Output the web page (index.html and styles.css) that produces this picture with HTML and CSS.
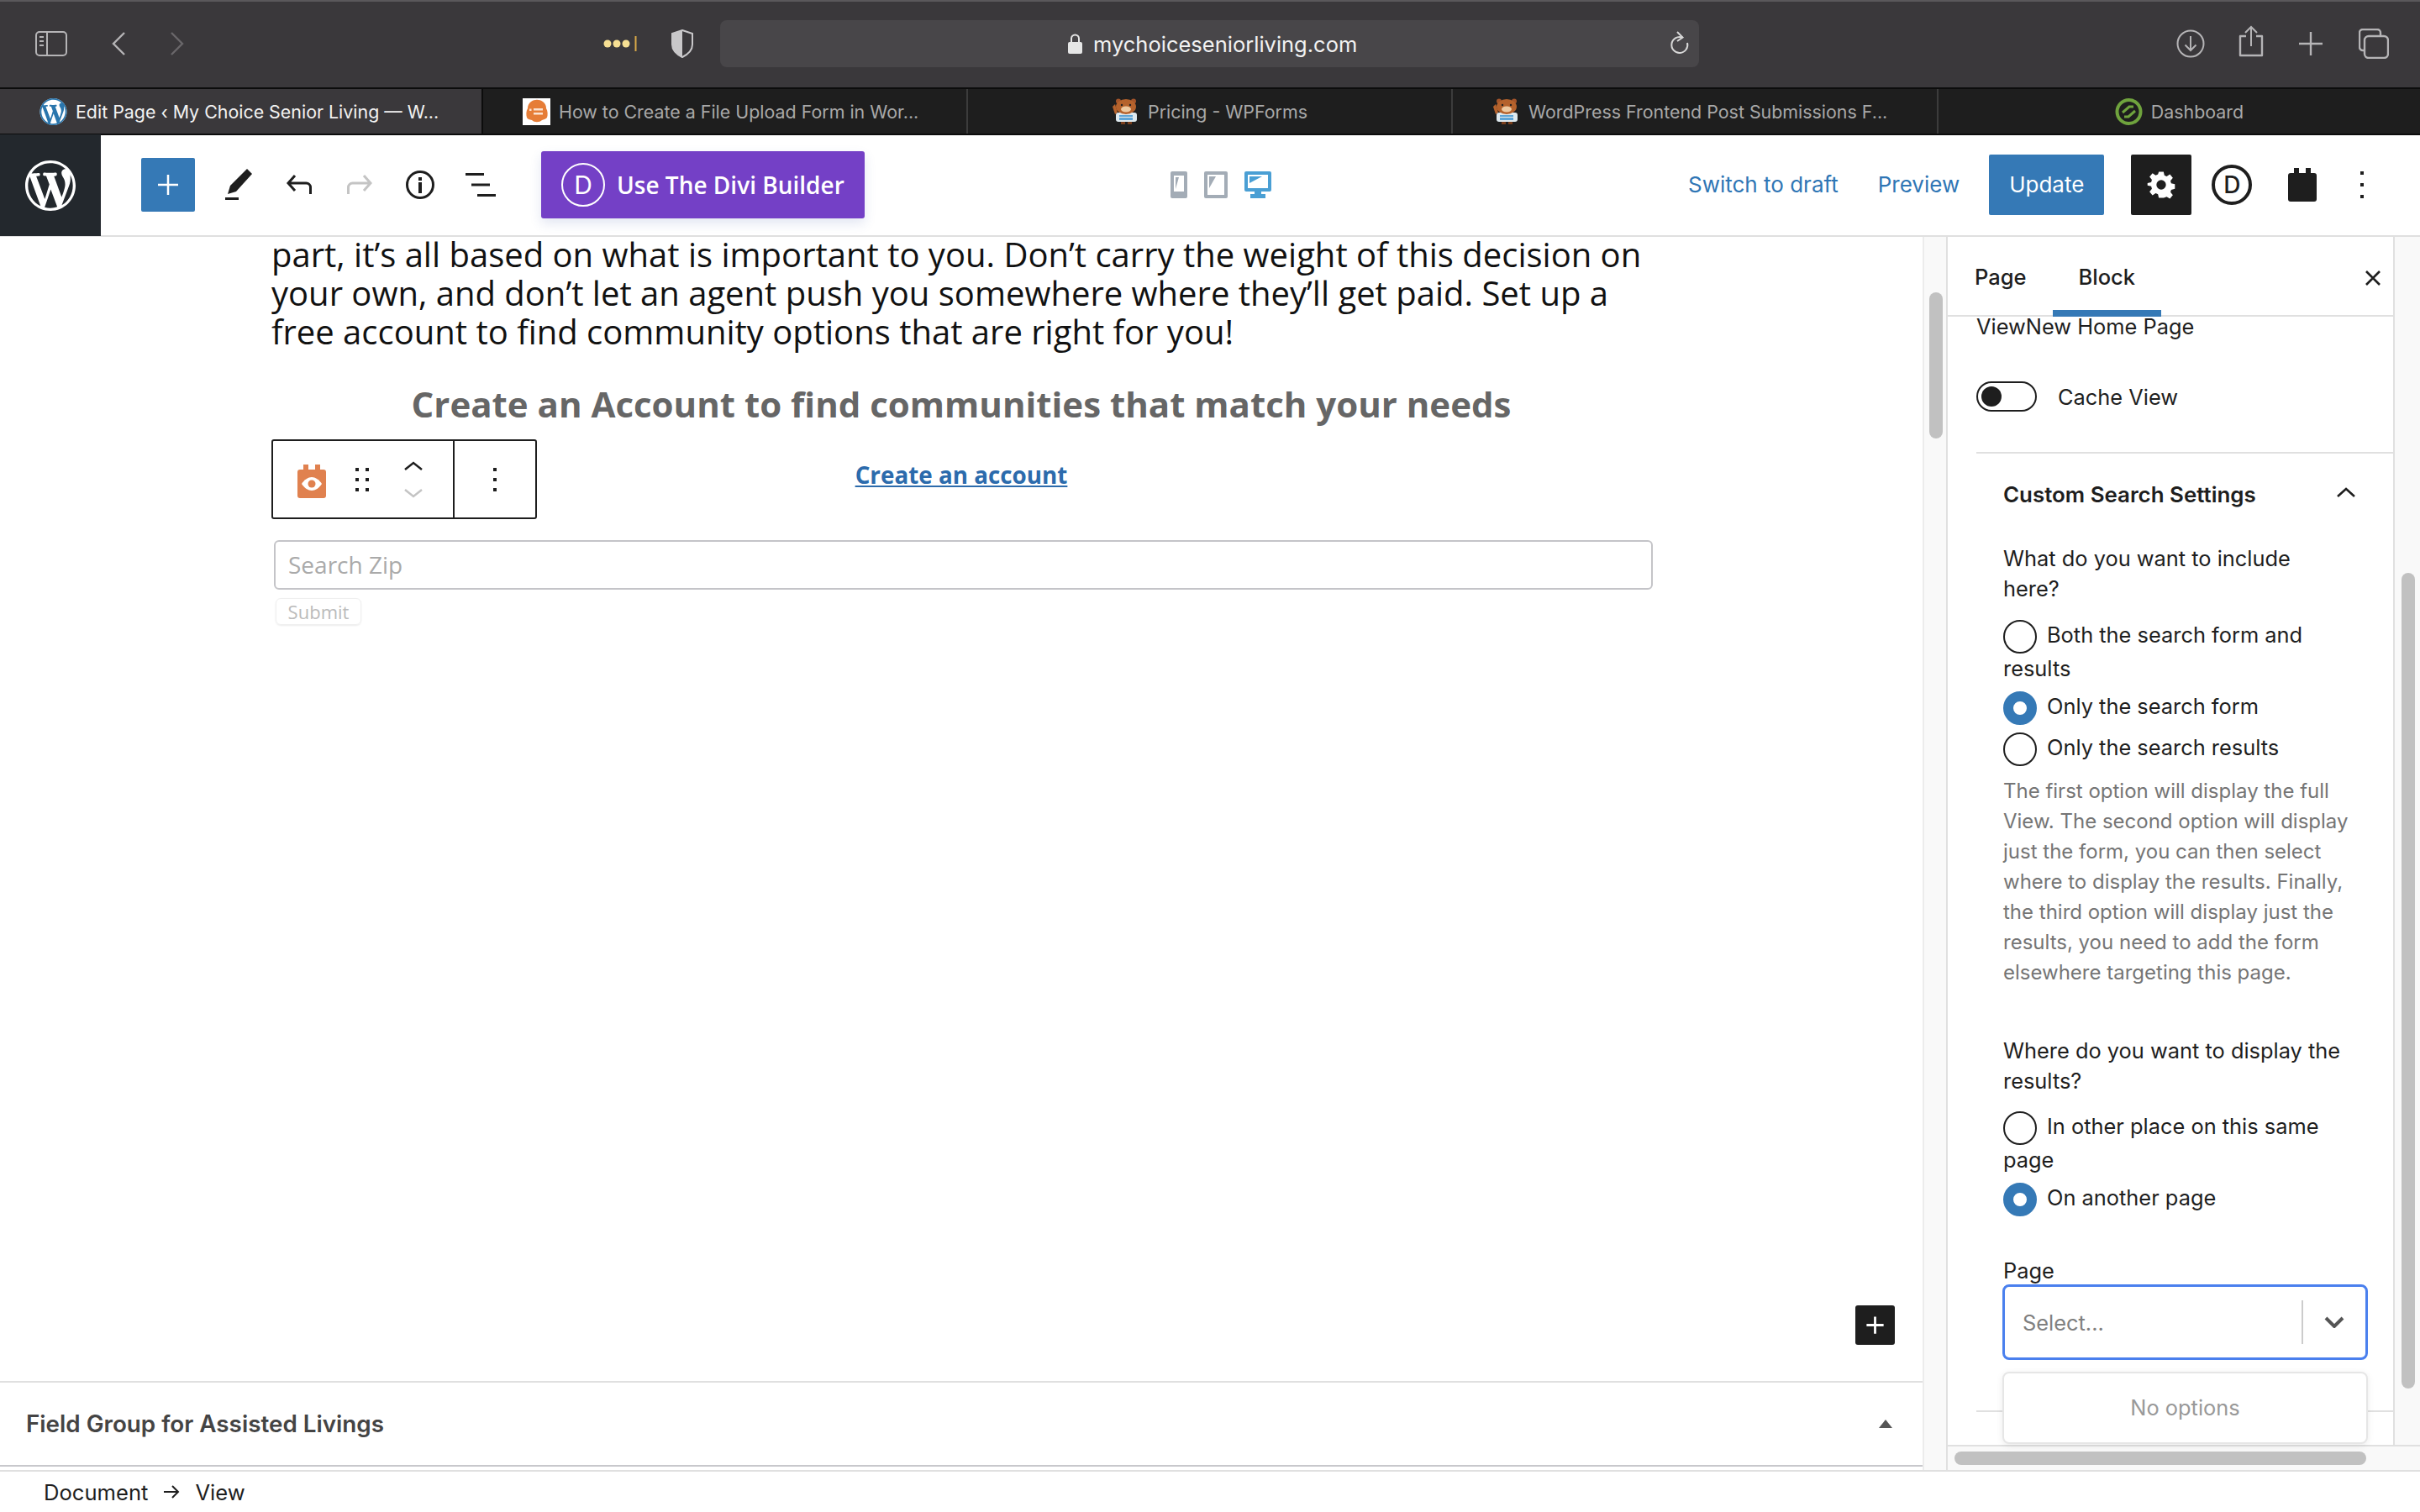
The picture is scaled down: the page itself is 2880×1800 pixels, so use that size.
FILE: index.html
```html
<!DOCTYPE html>
<html>
<head>
    <title>Edit Page ‹ My Choice Senior Living — WordPress</title>
    <link rel="stylesheet" href="styles.css">
</head>
<body>
<div class="browser">
    <div class="chrome">
        <svg class="c-side" viewBox="0 0 38 30"><rect x="1" y="1" width="36" height="28" rx="4" fill="none" stroke="#b5b4b6" stroke-width="2"/><path d="M14 1v28" stroke="#b5b4b6" stroke-width="2"/><path d="M5 7h5M5 12h5M5 17h5" stroke="#b5b4b6" stroke-width="2"/></svg>
        <svg class="c-back" viewBox="0 0 18 30"><path d="M16 2L3 15l13 13" fill="none" stroke="#b5b4b6" stroke-width="2.4"/></svg>
        <svg class="c-forward" viewBox="0 0 18 30"><path d="M2 2l13 13L2 28" fill="none" stroke="#69676a" stroke-width="2.4"/></svg>
        <svg class="c-dots" viewBox="0 0 40 18"><circle cx="5" cy="9" r="4.5" fill="#f6df93"/><circle cx="16" cy="9" r="4.5" fill="#f6df93"/><circle cx="27" cy="9" r="4.5" fill="#f6df93"/><path d="M38.500 0v18" stroke="#d8a848" stroke-width="2"/></svg>
        <svg class="c-shield" viewBox="0 0 28 34"><path d="M14 1l12 4v13c0 7-6 12-12 15C8 30 2 25 2 18V5z" fill="none" stroke="#c8c7c9" stroke-width="2"/><path d="M14 1L2 5v13c0 7 6 12 12 15z" fill="#c8c7c9"/></svg>
        <div class="urlbar">
            <div class="url-text">
                <svg class="c-lock" viewBox="0 0 17 24"><path d="M4 11V6a4.500 4.500 0 0 1 9 0v5" fill="none" stroke="#e6e6e6" stroke-width="2"/><rect y="10" width="17" height="14" rx="2" fill="#e6e6e6"/></svg>
                <span>mychoiceseniorliving.com</span>
            </div>
            <svg class="c-reload" viewBox="0 0 24 30"><path d="M15 7.500A9.500 9.500 0 1 0 21 14" fill="none" stroke="#d8d8d8" stroke-width="2"/><path d="M9 1l6.500 6.500L9 12" fill="none" stroke="#d8d8d8" stroke-width="2"/></svg>
        </div>
        <svg class="c-down" viewBox="0 0 34 34"><circle cx="17" cy="17" r="15.500" fill="none" stroke="#b5b4b6" stroke-width="2"/><path d="M17 8v17M10.500 18.500L17 25l6.500-6.500" fill="none" stroke="#b5b4b6" stroke-width="2"/></svg>
        <svg class="c-share" viewBox="0 0 30 38"><path d="M9 13H2v23h26V13h-7" fill="none" stroke="#b5b4b6" stroke-width="2.400" stroke-linejoin="round"/><path d="M15 25V2M8 9l7-7 7 7" fill="none" stroke="#b5b4b6" stroke-width="2"/></svg>
        <svg class="c-plus" viewBox="0 0 28 28"><path d="M14 0v28M0 14h28" stroke="#b5b4b6" stroke-width="2.400"/></svg>
        <svg class="c-tabs" viewBox="0 0 36 36"><rect x="7" y="9" width="28" height="26" rx="5" fill="none" stroke="#b5b4b6" stroke-width="2.400"/><path d="M6 26H5a4 4 0 0 1-4-4V5a4 4 0 0 1 4-4h17a4 4 0 0 1 4 4v3" fill="none" stroke="#b5b4b6" stroke-width="2.400"/></svg>
    </div>

    <div class="tabs">
        <div class="tab tab-active tab-left">
            <svg class="favicon" viewBox="0 0 20 20"><circle cx="10" cy="10" r="10" fill="#fff"/><path fill="#2a76ad" d="M20 10c0-5.510-4.490-10-10-10C4.480 0 0 4.490 0 10c0 5.520 4.480 10 10 10 5.510 0 10-4.480 10-10zM7.780 15.370L4.370 6.220c.55-.02 1.170-.08 1.170-.08.5-.06.44-1.130-.06-1.110 0 0-1.450.11-2.370.11-.18 0-.37 0-.58-.01C4.120 2.690 6.870 1.110 10 1.110c2.330 0 4.450.87 6.050 2.340-.68-.11-1.650.39-1.650 1.580 0 .74.45 1.360.9 2.100.35.61.55 1.360.55 2.460 0 1.490-1.400 5-1.400 5l-3.030-8.370c.54-.02.82-.17.82-.17.5-.05.44-1.250-.06-1.220 0 0-1.440.12-2.380.12-.87 0-2.330-.12-2.330-.12-.5-.03-.56 1.200-.06 1.220l.92.08 1.260 3.410zM17.410 10c.24-.64.74-1.870.43-4.250.7 1.290 1.050 2.710 1.050 4.250 0 3.290-1.730 6.240-4.400 7.780.97-2.590 1.940-5.200 2.920-7.780zM6.100 18.090C3.120 16.650 1.110 13.530 1.110 10c0-1.300.23-2.480.72-3.590C3.250 10.300 4.670 14.200 6.100 18.090zm4.030-6.630l2.580 6.980c-.86.29-1.760.45-2.710.45-.79 0-1.570-.11-2.290-.33.81-2.380 1.620-4.740 2.420-7.100z"/></svg>
            <span>Edit Page ‹ My Choice Senior Living — W...</span>
        </div>
        <div class="tab tab-left">
            <svg class="favicon" viewBox="0 0 33 32"><rect width="33" height="32" fill="#fff"/><path d="M10 4c4-3 10-3 14 0 3 2 4 5 4 8 2 3 2 8 1 11-2 2-4 2-6 3-3 3-9 3-12 0-3-1-5-1-6-3-1-3-1-8 1-11 0-3 1-6 4-8z" fill="#e67d37"/><path d="M8 12.500h2.500v2.500H8zM13 12h11v2.500H13zM13 17h11v2.500H13z" fill="#fbe3d2"/></svg>
            <span>How to Create a File Upload Form in Wor...</span>
        </div>
        <div class="tab">
            <svg class="favicon" viewBox="0 0 33 32"><path d="M1 10l3-3 3 10-3 2z" fill="#b5622c"/><rect x="5" y="17" width="25" height="11" rx="3" fill="#dfe9ee"/><rect x="9" y="20" width="16" height="6" fill="#5da5d8"/><path d="M9 22.500h16" stroke="#dfe9ee" stroke-width="1"/><circle cx="8" cy="3.500" r="3" fill="#a5552a"/><circle cx="26" cy="3.500" r="3" fill="#a5552a"/><ellipse cx="17" cy="10" rx="12" ry="9" fill="#b5622c"/><ellipse cx="17" cy="13" rx="6" ry="3.500" fill="#eec9a0"/><circle cx="12" cy="8" r="1.200" fill="#222"/><circle cx="22" cy="8" r="1.200" fill="#222"/><path d="M11 28h5v3h-5zM19 28h5v3h-5z" fill="#7a3f1c"/></svg>
            <span>Pricing - WPForms</span>
        </div>
        <div class="tab tab-left tab-wide">
            <svg class="favicon" viewBox="0 0 33 32"><path d="M1 10l3-3 3 10-3 2z" fill="#b5622c"/><rect x="5" y="17" width="25" height="11" rx="3" fill="#dfe9ee"/><rect x="9" y="20" width="16" height="6" fill="#5da5d8"/><path d="M9 22.500h16" stroke="#dfe9ee" stroke-width="1"/><circle cx="8" cy="3.500" r="3" fill="#a5552a"/><circle cx="26" cy="3.500" r="3" fill="#a5552a"/><ellipse cx="17" cy="10" rx="12" ry="9" fill="#b5622c"/><ellipse cx="17" cy="13" rx="6" ry="3.500" fill="#eec9a0"/><circle cx="12" cy="8" r="1.200" fill="#222"/><circle cx="22" cy="8" r="1.200" fill="#222"/><path d="M11 28h5v3h-5zM19 28h5v3h-5z" fill="#7a3f1c"/></svg>
            <span>WordPress Frontend Post Submissions F...</span>
        </div>
        <div class="tab tab-last">
            <svg class="favicon" viewBox="0 0 33 32"><circle cx="16.500" cy="16" r="14" fill="none" stroke="#6fa33d" stroke-width="4"/><path d="M9 17l8-7h5M11 22h5l8-7" fill="none" stroke="#6fa33d" stroke-width="3"/></svg>
            <span>Dashboard</span>
        </div>
    </div>

    <div class="edit-header">
        <div class="wp-logo">
            <svg viewBox="0 0 20 20"><path fill="#fff" d="M20 10c0-5.510-4.490-10-10-10C4.480 0 0 4.490 0 10c0 5.520 4.480 10 10 10 5.510 0 10-4.480 10-10zM7.780 15.370L4.370 6.220c.55-.02 1.170-.08 1.170-.08.5-.06.44-1.130-.06-1.110 0 0-1.450.11-2.370.11-.18 0-.37 0-.58-.01C4.120 2.690 6.870 1.110 10 1.110c2.330 0 4.450.87 6.050 2.340-.68-.11-1.650.39-1.650 1.580 0 .74.45 1.360.9 2.100.35.61.55 1.360.55 2.460 0 1.490-1.400 5-1.400 5l-3.030-8.370c.54-.02.82-.17.82-.17.5-.05.44-1.250-.06-1.220 0 0-1.440.12-2.380.12-.87 0-2.330-.12-2.330-.12-.5-.03-.56 1.200-.06 1.220l.92.08 1.260 3.410zM17.410 10c.24-.64.74-1.870.43-4.250.7 1.290 1.050 2.710 1.050 4.250 0 3.290-1.730 6.240-4.400 7.780.97-2.590 1.940-5.200 2.920-7.780zM6.100 18.090C3.120 16.650 1.110 13.530 1.110 10c0-1.300.23-2.480.72-3.590C3.250 10.300 4.670 14.200 6.100 18.090zm4.030-6.630l2.580 6.980c-.86.29-1.760.45-2.710.45-.79 0-1.570-.11-2.290-.33.81-2.380 1.620-4.740 2.420-7.100z"/></svg>
        </div>
        <div class="add-btn"><svg viewBox="0 0 24 24"><path d="M12 0v24M0 12h24" stroke="#fff" stroke-width="2.500"/></svg></div>
        <svg class="i-pen" viewBox="0 0 32 38"><path d="M26 0l6 6-19 21-10 3 3-10z" fill="#1e1e1e"/><path d="M0 34h16v3H0z" fill="#1e1e1e"/></svg>
        <svg class="i-undo" viewBox="0 0 32 26"><path d="M29.500 24V16a5 5 0 0 0-5-5H3M11 2L3 11l8 9" fill="none" stroke="#1e1e1e" stroke-width="3"/></svg>
        <svg class="i-redo" viewBox="0 0 32 26"><path d="M2.500 24V16a5 5 0 0 1 5-5H29M21 2l8 9-8 9" fill="none" stroke="#c4c4c4" stroke-width="3"/></svg>
        <svg class="i-info" viewBox="0 0 34 36"><circle cx="17" cy="18" r="15.500" fill="none" stroke="#1e1e1e" stroke-width="3"/><path d="M15 9h4v4h-4zM15 15h4v13h-4z" fill="#1e1e1e"/></svg>
        <svg class="i-list" viewBox="0 0 36 30"><path d="M0 1h22v3H0zM7 13.500h22v3H7zM14 26h22v3H14z" fill="#1e1e1e"/></svg>
        <div class="divi-btn">
            <span class="divi-d">D</span>
            <span>Use The Divi Builder</span>
        </div>
        <svg class="i-phone" viewBox="0 0 20 32"><rect width="20" height="32" rx="2" fill="#a3acb6"/><rect x="4" y="5" width="12" height="19" fill="#fff"/><path d="M6 7h4l-4 14z" fill="#a3acb6"/></svg>
        <svg class="i-tablet" viewBox="0 0 28 32"><rect width="28" height="32" rx="2" fill="#a3acb6"/><rect x="4" y="4" width="20" height="24" fill="#fff"/><path d="M6 6h8L6 20z" fill="#a3acb6"/></svg>
        <svg class="i-desktop" viewBox="0 0 32 32"><path d="M12 24h8v3h-8zM7 27h18v5H7z" fill="#4a9fd4"/><rect width="32" height="24" rx="2" fill="#4a9fd4"/><rect x="4" y="4" width="24" height="16" fill="#fff"/><path d="M6 6h15L6 14z" fill="#4a9fd4"/></svg>
        <a class="head-link link-draft">Switch to draft</a>
        <a class="head-link link-preview">Preview</a>
        <div class="update-btn">Update</div>
        <div class="gear-btn"><svg viewBox="0 0 24 24"><path fill="#fff" fill-rule="evenodd" d="M10 1h4l.7 3.100 1.900.8 2.700-1.700 2.500 3-2 2.500.6 2 3.100.8v3.900l-3.100.8-.6 2 2 2.500-2.500 3-2.700-1.700-1.900.8L14 23h-4l-.7-3.100-1.900-.8-2.700 1.700-2.500-3 2-2.500-.6-2-3.100-.8V10.600l3.100-.8.6-2-2-2.500 2.500-3 2.700 1.700 1.900-.8zM12 8a4 4 0 1 0 0 8 4 4 0 0 0 0-8z"/></svg></div>
        <span class="divi-small">D</span>
        <svg class="i-cal" viewBox="0 0 34 40"><path d="M7 0h6v6h8V0h6v6h4a3 3 0 0 1 3 3v28a3 3 0 0 1-3 3H3a3 3 0 0 1-3-3V9a3 3 0 0 1 3-3h4z" fill="#1e1e1e"/></svg>
        <svg class="i-kebab" viewBox="0 0 4 32"><path d="M0 0h4v4H0zM0 14h4v4H0zM0 28h4v4H0z" fill="#1e1e1e"/></svg>
    </div>

    <div class="edit-body">
        <div class="main">
            <div class="canvas">
                <p class="para">part, it’s all based on what is important to you. Don’t carry the weight of this decision on your own, and don’t let an agent push you somewhere where they’ll get paid. Set up a free account to find community options that are right for you!</p>
                <h2 class="cta">Create an Account to find communities that match your needs</h2>
                <a class="cta-link">Create an account</a>
                <div class="search-input">Search Zip</div>
                <div class="submit-btn">Submit</div>

                <div class="block-toolbar">
                    <div class="bt-left">
                        <svg class="bt-cal" viewBox="0 0 34 40"><path d="M7 0h6v6h8V0h6v6h4a3 3 0 0 1 3 3v28a3 3 0 0 1-3 3H3a3 3 0 0 1-3-3V9a3 3 0 0 1 3-3h4z" fill="#e0814f"/><path d="M5 23c3-5 8-8 12-8s9 3 12 8c-3 5-8 8-12 8S8 28 5 23z" fill="#fff"/><circle cx="17" cy="23" r="4.500" fill="#e0814f"/></svg>
                        <svg class="bt-drag" viewBox="0 0 16 28"><path d="M0 0h4v4H0zM12 0h4v4h-4zM0 12h4v4H0zM12 12h4v4h-4zM0 24h4v4H0zM12 24h4v4h-4z" fill="#1e1e1e"/></svg>
                        <svg class="bt-move" viewBox="0 0 22 44"><path d="M1 10L11 2l10 8" fill="none" stroke="#1e1e1e" stroke-width="2.500"/><path d="M1 34l10 8 10-8" fill="none" stroke="#c4c4c4" stroke-width="2.500"/></svg>
                    </div>
                    <div class="bt-right">
                        <svg class="bt-kebab" viewBox="0 0 4 28"><path d="M0 0h4v4H0zM0 12h4v4H0zM0 24h4v4H0z" fill="#1e1e1e"/></svg>
                    </div>
                </div>

                <div class="inserter"><svg viewBox="0 0 24 24"><path d="M12 3v18M3 12h18" stroke="#fff" stroke-width="2.500"/></svg></div>
            </div>
            <div class="metabox">
                <span>Field Group for Assisted Livings</span>
                <svg class="meta-arrow" viewBox="0 0 16 10"><path d="M8 0l8 10H0z" fill="#555"/></svg>
            </div>
        </div>

        <div class="vbar"><div class="thumb thumb-main"></div></div>

        <div class="side-wrap">
            <div class="side-row">
                <div class="sidebar">
                    <div class="side-tabs">
                        <div class="side-tab">Page</div>
                        <div class="side-tab side-tab-on">Block</div>
                        <svg class="side-close" viewBox="0 0 18 18"><path d="M1 1l16 16M17 1L1 17" stroke="#1e1e1e" stroke-width="2.600"/></svg>
                    </div>
                    <div class="side-body">
                        <div class="view-name">ViewNew Home Page</div>
                        <div class="toggle-row">
                            <span class="toggle"><span class="toggle-knob"></span></span>
                            <span>Cache View</span>
                        </div>
                        <div class="divider"></div>
                        <div class="panel">
                            <div class="panel-title">
                                <span>Custom Search Settings</span>
                                <svg class="panel-chev" viewBox="0 0 22 12"><path d="M1 11L11 2l10 9" fill="none" stroke="#1e1e1e" stroke-width="2.600"/></svg>
                            </div>
                            <div class="question">What do you want to include here?</div>
                            <div class="option"><span class="radio"></span>Both the search form and results</div>
                            <div class="option"><span class="radio radio-on"></span>Only the search form</div>
                            <div class="option"><span class="radio"></span>Only the search results</div>
                            <div class="help">The first option will display the full View. The second option will display just the form, you can then select where to display the results. Finally, the third option will display just the results, you need to add the form elsewhere targeting this page.</div>
                            <div class="question question-two">Where do you want to display the results?</div>
                            <div class="option"><span class="radio"></span>In other place on this same page</div>
                            <div class="option"><span class="radio radio-on"></span>On another page</div>
                            <div class="field-label">Page</div>
                            <div class="select">
                                <span class="select-text">Select...</span>
                                <span class="select-sep"></span>
                                <svg class="select-chev" viewBox="0 0 24 14"><path d="M2 2l10 10L22 2" fill="none" stroke="#555" stroke-width="4"/></svg>
                                <div class="select-menu">No options</div>
                            </div>
                        </div>
                        <div class="divider divider-low"></div>
                    </div>
                </div>
                <div class="vbar vbar-side"><div class="thumb thumb-side"></div></div>
            </div>
            <div class="hbar"><div class="hthumb"></div></div>
        </div>
    </div>

    <div class="crumbs">
        <span>Document</span>
        <svg class="crumb-arrow" viewBox="0 0 20 16"><path d="M1 8h17M11 1l7 7-7 7" fill="none" stroke="#1e1e1e" stroke-width="2"/></svg>
        <span>View</span>
    </div>
</div>
</body>
</html>
```

FILE: styles.css
```css
* {
    box-sizing: border-box;
}
body {
    margin: 0;
    background: #fff;
    color: #1e1e1e;
    font-family: Inter, "Liberation Sans", sans-serif;
    overflow: hidden;
}
svg {
    display: block;
    flex: none;
}
.browser {
    width: 2880px;
    height: 1800px;
    display: flex;
    flex-direction: column;
}

/* browser chrome */
.chrome {
    height: 104px;
    display: flex;
    align-items: center;
    background: #3a383b;
    border-top: 2px solid #5a585b;
    padding: 0 0 2px 42px;
}
.c-side { width: 38px; height: 30px; }
.c-back { width: 18px; height: 30px; margin-left: 52px; }
.c-forward { width: 18px; height: 30px; margin-left: 52px; }
.c-dots { width: 40px; height: 18px; margin-left: 498px; }
.c-shield { width: 28px; height: 34px; margin-left: 40px; }
.urlbar {
    width: 1165px;
    height: 56px;
    margin-left: 31px;
    background: #484649;
    border-radius: 8px;
    display: flex;
    align-items: center;
    position: relative;
    padding-left: 414px;
    color: #f2f2f2;
    font-size: 25.5px;
}
.url-text {
    display: flex;
    align-items: center;
    gap: 13px;
}
.c-lock { width: 17px; height: 24px; }
.c-reload { width: 24px; height: 30px; margin-left: auto; margin-right: 11px; }
.c-down { width: 34px; height: 34px; margin-left: 568px; }
.c-share { width: 30px; height: 38px; margin-left: 40px; margin-top: -6px; }
.c-plus { width: 28px; height: 28px; margin-left: 42px; }
.c-tabs { width: 36px; height: 36px; margin-left: 43px; }

.tabs {
    height: 57px;
    display: flex;
    background: #1e1e1e;
    border-top: 2px solid #0c0c0c;
    border-bottom: 2px solid #0c0c0c;
    color: #a8a8a8;
    font-size: 21.4px;
}
.tab {
    width: 577px;
    display: flex;
    align-items: center;
    justify-content: center;
    gap: 10px;
    border-right: 2px solid #3c3c3c;
    white-space: nowrap;
}
.tab-left {
    justify-content: flex-start;
    padding-left: 47px;
}
.tab-wide {
    width: 578px;
}
.tab-last {
    flex: 1;
    width: auto;
    border-right: 0;
}
.tab-active {
    width: 575px;
    background: #3a383b;
    color: #f2f2f2;
    border-right: 2px solid #0c0c0c;
}
.favicon {
    width: 33px;
    height: 32px;
}

/* editor header */
.edit-header {
    height: 121px;
    display: flex;
    align-items: center;
    border-bottom: 2px solid #e0e0e0;
    padding-bottom: 2px;
}
.wp-logo {
    width: 120px;
    height: 121px;
    margin-bottom: -2px;
    background: #23282d;
    display: flex;
    align-items: center;
    justify-content: center;
}
.wp-logo svg { width: 60px; height: 60px; }
.add-btn {
    width: 64px;
    height: 64px;
    margin-left: 48px;
    background: #3579b6;
    border-radius: 2px;
    display: flex;
    align-items: center;
    justify-content: center;
}
.add-btn svg { width: 24px; height: 24px; }
.i-pen { width: 32px; height: 38px; margin-left: 36px; }
.i-undo { width: 32px; height: 26px; margin-left: 40px; }
.i-redo { width: 32px; height: 26px; margin-left: 40px; }
.i-info { width: 34px; height: 36px; margin-left: 39px; }
.i-list { width: 36px; height: 30px; margin-left: 37px; }
.divi-btn {
    width: 385px;
    height: 80px;
    margin-left: 54px;
    background: #7440c6;
    border-radius: 3px;
    box-shadow: 0 6px 14px rgba(60, 90, 170, 0.15);
    display: flex;
    align-items: center;
    gap: 14px;
    padding-left: 24px;
    color: #fff;
    font-family: "Open Sans", sans-serif;
    font-size: 28px;
    font-weight: 600;
}
.divi-d {
    width: 52px;
    height: 52px;
    border: 2px solid #fff;
    border-radius: 50%;
    display: flex;
    align-items: center;
    justify-content: center;
    font-family: Inter, sans-serif;
    font-weight: 400;
    font-size: 30px;
}
.i-phone { width: 20px; height: 32px; margin-left: 364px; }
.i-tablet { width: 28px; height: 32px; margin-left: 20px; }
.i-desktop { width: 32px; height: 32px; margin-left: 20px; }
.head-link {
    color: #2f76b5;
    font-size: 26px;
    white-space: nowrap;
}
.link-draft { margin-left: 496px; }
.link-preview { margin-left: 47px; }
.update-btn {
    width: 137px;
    height: 72px;
    margin-left: 35px;
    background: #3579b6;
    border-radius: 2px;
    color: #fff;
    font-size: 26px;
    display: flex;
    align-items: center;
    justify-content: center;
}
.gear-btn {
    width: 72px;
    height: 72px;
    margin-left: 32px;
    background: #1e1e1e;
    border-radius: 2px;
    display: flex;
    align-items: center;
    justify-content: center;
}
.gear-btn svg { width: 34px; height: 34px; }
.divi-small {
    width: 48px;
    height: 48px;
    margin-left: 24px;
    border: 4px solid #1e1e1e;
    border-radius: 50%;
    display: flex;
    align-items: center;
    justify-content: center;
    font-size: 28px;
    font-weight: 500;
}
.i-cal { width: 34px; height: 40px; margin-left: 43px; }
.i-kebab { width: 4px; height: 32px; margin-left: 52px; }

/* editor body */
.edit-body {
    height: 1468px;
    display: flex;
}
.main {
    width: 2288px;
    display: flex;
    flex-direction: column;
}
.canvas {
    position: relative;
    height: 1362px;
    padding-left: 323px;
    font-family: "Open Sans", sans-serif;
}
.para {
    width: 1650px;
    margin: -2px 0 0;
    font-size: 40px;
    line-height: 46px;
    color: #111;
}
.cta {
    width: 1642px;
    margin: 33px 0 0;
    font-size: 42px;
    line-height: 60px;
    font-weight: 700;
    color: #666;
    text-align: center;
}
.cta-link {
    display: block;
    width: 1642px;
    margin-top: 32px;
    text-align: center;
    font-size: 27.8px;
    line-height: 44px;
    font-weight: 700;
    color: #2c6bac;
    text-decoration: underline;
}
.search-input {
    width: 1641px;
    height: 59px;
    margin: 56px 0 0 3px;
    border: 2px solid #c4c4c8;
    border-radius: 6px;
    padding-left: 15px;
    font-size: 28px;
    line-height: 55px;
    color: #aaa;
}
.submit-btn {
    width: 102px;
    height: 32px;
    margin: 10px 0 0 5px;
    border: 1px solid #efefef;
    border-radius: 6px;
    box-shadow: 0 1px 2px rgba(0, 0, 0, 0.08);
    font-size: 22px;
    line-height: 30px;
    text-align: center;
    color: #bbb;
}
.block-toolbar {
    position: absolute;
    left: 323px;
    top: 241px;
    width: 316px;
    height: 95px;
    display: flex;
    background: #fff;
    border: 2px solid #1e1e1e;
    border-radius: 3px;
}
.bt-left {
    width: 216px;
    border-right: 2px solid #1e1e1e;
    display: flex;
    align-items: center;
}
.bt-cal { width: 34px; height: 40px; margin-left: 29px; margin-top: 4px; }
.bt-drag { width: 16px; height: 28px; margin-left: 35px; }
.bt-move { width: 22px; height: 44px; margin-left: 42px; }
.bt-right {
    flex: 1;
    display: flex;
    align-items: center;
    justify-content: center;
}
.bt-kebab { width: 4px; height: 28px; }
.inserter {
    position: absolute;
    left: 2208px;
    top: 1272px;
    width: 47px;
    height: 47px;
    background: #1e1e1e;
    border-radius: 3px;
    padding: 10px;
}
.metabox {
    height: 102px;
    border-top: 2px solid #e0e0e0;
    border-bottom: 2px solid #c8c8cc;
    display: flex;
    align-items: center;
    justify-content: space-between;
    padding: 0 36px 0 31px;
    font-size: 27.8px;
    font-weight: 600;
    color: #444;
}
.meta-arrow { width: 16px; height: 10px; }

/* scrollbars */
.vbar {
    width: 30px;
    background: #f9f9f9;
    border-left: 2px solid #ececec;
    border-right: 2px solid #e0e0e0;
    padding-left: 6px;
}
.thumb {
    width: 16px;
    background: #c1c1c1;
    border-radius: 8px;
}
.thumb-main {
    height: 174px;
    margin-top: 66px;
}
.vbar-side {
    border-left: 0;
    border-right: 0;
    padding-left: 8px;
}
.thumb-side {
    height: 971px;
    margin-top: 400px;
}
.hbar {
    height: 30px;
    background: #f9f9f9;
    border-top: 2px solid #e0e0e0;
    padding: 6px 0 0 8px;
}
.hthumb {
    width: 490px;
    height: 16px;
    background: #c1c1c1;
    border-radius: 8px;
}

/* settings sidebar */
.side-wrap {
    width: 562px;
    display: flex;
    flex-direction: column;
}
.side-row {
    height: 1438px;
    display: flex;
}
.sidebar {
    width: 532px;
    border-right: 2px solid #e0e0e0;
    display: flex;
    flex-direction: column;
}
.side-tabs {
    height: 95px;
    flex: none;
    display: flex;
    border-bottom: 2px solid #e0e0e0;
    font-size: 25.5px;
    font-weight: 500;
    position: relative;
}
.side-tab {
    height: 95px;
    padding: 0 31px;
    line-height: 96px;
}
.side-tab:first-child {
    padding-left: 32px;
}
.side-tab-on {
    border-bottom: 8px solid #3579b6;
}
.side-close {
    position: absolute;
    right: 15px;
    top: 40px;
    width: 18px;
    height: 18px;
}
.side-body {
    flex: 1;
    position: relative;
    padding-left: 34px;
    font-size: 25.4px;
}
.view-name {
    line-height: 24px;
}
.toggle-row {
    margin-top: 53px;
    display: flex;
    align-items: center;
    gap: 25px;
    height: 36px;
}
.toggle {
    width: 72px;
    height: 36px;
    border: 2px solid #1e1e1e;
    border-radius: 18px;
    display: flex;
    align-items: center;
    padding-left: 4px;
}
.toggle-knob {
    width: 24px;
    height: 24px;
    background: #1e1e1e;
    border-radius: 50%;
}
.divider {
    width: 496px;
    height: 2px;
    margin-top: 48px;
    background: #e0e0e0;
}
.divider-low {
    margin-top: 60px;
}
.panel {
    padding-left: 32px;
    width: 475px;
}
.panel-title {
    margin-top: 31px;
    height: 36px;
    display: flex;
    align-items: center;
    justify-content: space-between;
    font-size: 25.9px;
    font-weight: 600;
    line-height: 36px;
    padding-right: 24px;
}
.panel-chev {
    width: 22px;
    height: 12px;
    margin-top: -6px;
}
.question {
    margin-top: 40px;
    width: 412px;
    line-height: 36px;
}
.question-two {
    margin-top: 57px;
}
.option {
    width: 412px;
    margin-top: 9px;
    line-height: 36px;
}
.question + .option {
    margin-top: 19px;
}
.question-two + .option {
    margin-top: 18px;
}
.radio {
    display: inline-block;
    width: 40px;
    height: 40px;
    margin-right: 12px;
    border: 2px solid #1e1e1e;
    border-radius: 50%;
    vertical-align: middle;
}
.radio-on {
    border: 12px solid #3579b6;
    background: #fff;
}
.help {
    width: 412px;
    margin-top: 12px;
    font-size: 24px;
    line-height: 36px;
    color: #757575;
}
.field-label {
    margin-top: 47px;
    line-height: 36px;
}
.select {
    position: relative;
    width: 435px;
    height: 90px;
    margin: -2px 0 0 -1px;
    border: 3px solid #4a80ee;
    border-radius: 8px;
    display: flex;
    align-items: center;
    padding-left: 21px;
}
.select-text {
    flex: 1;
    color: #808080;
}
.select-sep {
    width: 2px;
    height: 52px;
    background: #ccc;
}
.select-chev {
    width: 24px;
    height: 14px;
    margin: 0 25px 0 25px;
}
.select-menu {
    position: absolute;
    left: -3px;
    top: 101px;
    width: 435px;
    height: 86px;
    background: #fff;
    border: 2px solid #e6e6e6;
    border-radius: 8px;
    box-shadow: 0 2px 8px rgba(0, 0, 0, 0.08);
    text-align: center;
    line-height: 82px;
    color: #999;
}

/* breadcrumbs */
.crumbs {
    height: 50px;
    display: flex;
    align-items: center;
    gap: 18px;
    border-top: 2px solid #e0e0e0;
    padding-left: 52px;
    font-size: 25.6px;
}
.crumb-arrow {
    width: 20px;
    height: 16px;
}
```
